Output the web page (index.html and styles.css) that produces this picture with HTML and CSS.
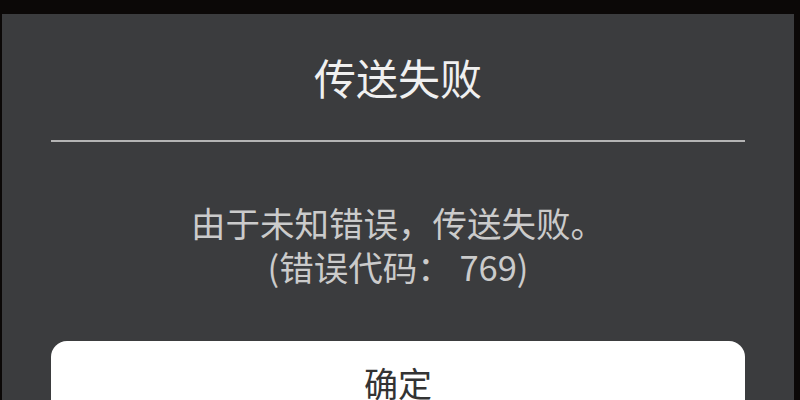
FILE: index.html
```html
<!DOCTYPE html>
<html lang="zh-CN">
<head>
<meta charset="utf-8">
<link rel="stylesheet" href="styles.css">
</head>
<body>
<div class="dialog">
  <div class="title">传送失败</div>
  <div class="divider"></div>
  <div class="message">
    <div>由于未知错误，传送失败。</div>
    <div>(错误代码： 769)</div>
  </div>
  <div class="button">确定</div>
</div>
</body>
</html>
```
FILE: styles.css
```css
html, body {
  margin: 0;
  padding: 0;
  height: 100%;
  overflow: hidden;
  background: #0b0807;
}
body {
  font-family: "Noto Sans CJK SC", "Noto Sans", sans-serif;
}
.dialog {
  margin: 14px 0 0 2px;
  width: 792px;
  height: 386px;
  box-sizing: border-box;
  padding: 42px 49px 0 49px;
  background: #3b3c3e;
  display: flex;
  flex-direction: column;
  overflow: hidden;
}
.dialog > * {
  flex-shrink: 0;
}
.title {
  font-size: 42px;
  line-height: 42px;
  color: #f0f0f0;
  text-align: center;
}
.divider {
  margin-top: 42px;
  height: 2px;
  background: #b4b4b4;
}
.message {
  margin-top: 58px;
  font-size: 34.5px;
  line-height: 44px;
  color: #cbcbcb;
  text-align: center;
}
.button {
  margin-top: 53px;
  background: #ffffff;
  border-radius: 16px 16px 0 0;
  height: 80px;
  padding-top: 22px;
  box-sizing: border-box;
  font-size: 34px;
  line-height: 40px;
  color: #333333;
  text-align: center;
}
```
